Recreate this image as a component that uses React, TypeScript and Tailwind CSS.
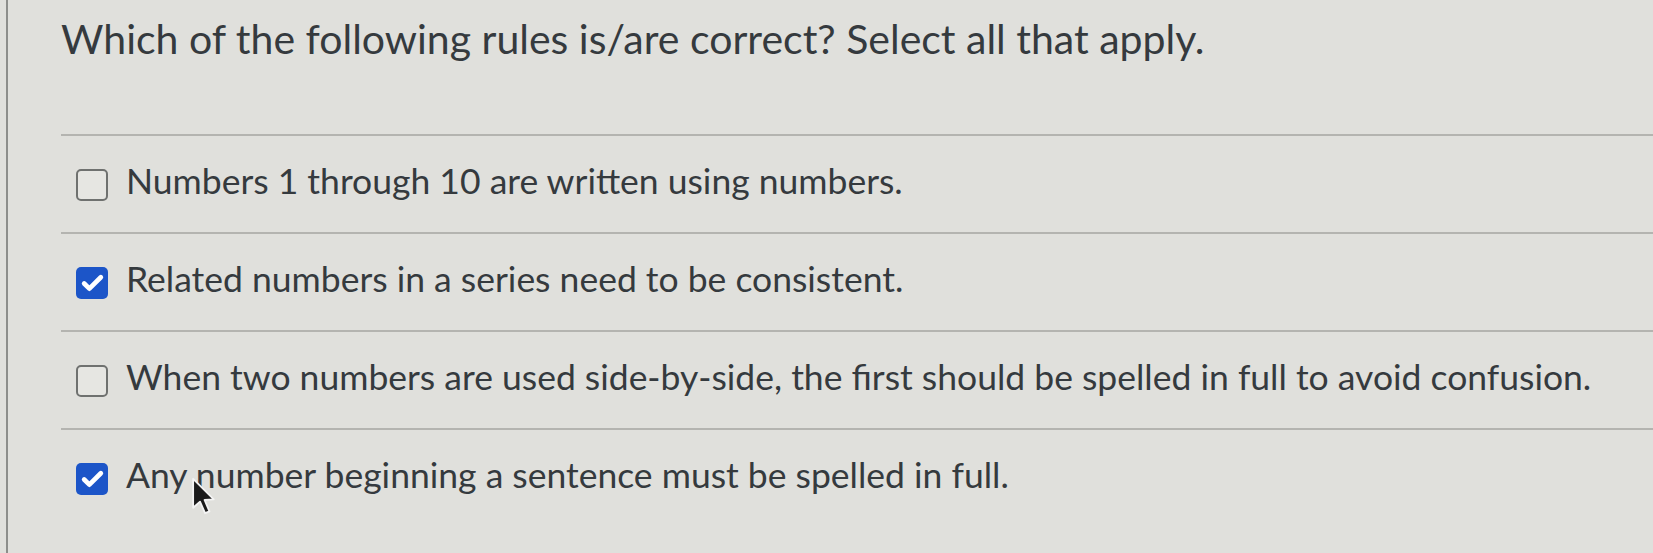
import { Check } from 'lucide-react';

const options = [
  { id: 1, label: 'Numbers 1 through 10 are written using numbers.', checked: false },
  { id: 2, label: 'Related numbers in a series need to be consistent.', checked: true },
  { id: 3, label: 'When two numbers are used side-by-side, the first should be spelled in full to avoid confusion.', checked: false },
  { id: 4, label: 'Any number beginning a sentence must be spelled in full.', checked: true },
];

const Box = ({ checked }: { checked: boolean }) =>
  checked ? (
    <div className="mt-[9px] w-[32px] h-[32px] shrink-0 rounded-[5px] bg-[#1c55c8] flex items-center justify-center">
      <Check className="w-[25px] h-[25px] text-white" strokeWidth={4.5} />
    </div>
  ) : (
    <div className="mt-[9px] w-[32px] h-[32px] shrink-0 rounded-[5px] border-2 border-[#6f716f] bg-[#e6e6e2]" />
  );

const Cursor = () => (
  <svg className="absolute left-[191px] top-[477px]" width="26" height="38" viewBox="0 0 14 21">
    <path d="M1 1 L1 17 L4.8 13.6 L7.6 20 L10 19 L7.3 12.7 L12.4 12.4 Z" fill="#1b1b1b" stroke="#f4f4f4" strokeWidth="1" strokeLinejoin="round" />
  </svg>
);

export default function App() {
  return (
    <div className="relative h-[553px] w-full overflow-hidden bg-[#e0e0dc] font-['Lato','Noto_Sans',sans-serif] text-[#353a3e]">
      <div className="ml-[6px] h-full border-l-2 border-[#8d8e8b] pl-[53px]">
        <h1 className="pt-[16px] pb-[72px] text-[41px] leading-[46px] whitespace-nowrap">
          Which of the following rules is/are correct? Select all that apply.
        </h1>
        <div>
          {options.map((o) => (
            <div key={o.id} className="border-t-2 border-[#b4b4b0] pt-[24px] pb-[31px] pl-[15px] flex items-start gap-[18px]">
              <Box checked={o.checked} />
              <span className="text-[35.5px] leading-[41px] whitespace-nowrap">{o.label}</span>
            </div>
          ))}
        </div>
      </div>
      <Cursor />
    </div>
  );
}
